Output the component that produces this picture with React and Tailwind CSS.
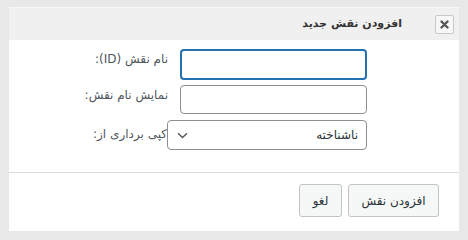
import React from "react";

export default function App() {
  const font = { fontFamily: '"DejaVu Sans", "Noto Sans", sans-serif' };
  return (
    <div className="w-[468px] h-[240px] bg-[#e8e8e8] pt-[7px] pl-[9px]" style={font}>
      <div dir="rtl" className="w-[450px] h-[224px] bg-white flex flex-col border-t border-[#f8f8f8]">
        <div className="h-[32px] bg-[#f0f0f0] flex items-center pr-[5px] shrink-0">
          <button className="w-[19px] h-[19px] border border-[#c9c9c9] bg-[#f7f7f7] rounded-[2px] flex items-center justify-center">
            <svg width="9" height="9" viewBox="0 0 9 9">
              <path d="M1.5 1.5 L7.5 7.5 M7.5 1.5 L1.5 7.5" stroke="#555" strokeWidth="2.4" strokeLinecap="round" />
            </svg>
          </button>
          <div className="mr-[33px] text-[11px] font-bold text-[#333]">افزودن نقش جدید</div>
        </div>
        <div className="flex flex-col pr-[92px] pt-[9px] h-[132px]">
          <div className="flex items-start">
            <input className="w-[187px] h-[31px] rounded-[4px] border-2 border-[#2271b1] outline-none" />
            <label className="mr-[12px] mt-[1px] text-[12px] text-[#50575e]">نام نقش (ID):</label>
          </div>
          <div className="flex items-start mt-[5px]">
            <input className="w-[187px] h-[29px] rounded-[4px] border border-[#8c8f94] outline-none" />
            <label className="mr-[12px] mt-[1px] text-[12px] text-[#50575e]">نمایش نام نقش:</label>
          </div>
          <div className="flex items-center mt-[6px]">
            <div className="w-[200px] h-[30px] rounded-[4px] border border-[#8c8f94] flex items-center justify-between pr-[8px] pl-[9px]">
              <span className="text-[12px] text-[#2c3338]">ناشناخته</span>
              <svg width="11" height="7" viewBox="0 0 11 7">
                <path d="M1 1.2 L5.5 5.5 L10 1.2" fill="none" stroke="#50575e" strokeWidth="1.4" />
              </svg>
            </div>
            <label className="text-[12px] text-[#50575e] -mt-[2px]">کپی برداری از:</label>
          </div>
        </div>
        <div className="border-t border-[#dcdcde] flex items-center pr-[20px] pt-[11px] gap-[6px]">
          <button className="h-[33px] w-[91px] rounded-[3px] border border-[#c3c4c7] bg-[#f6f7f7] text-[12px] text-[#2c3338]">افزودن نقش</button>
          <button className="h-[33px] w-[43px] rounded-[3px] border border-[#c3c4c7] bg-[#f6f7f7] text-[12px] text-[#2c3338]">لغو</button>
        </div>
      </div>
    </div>
  );
}
